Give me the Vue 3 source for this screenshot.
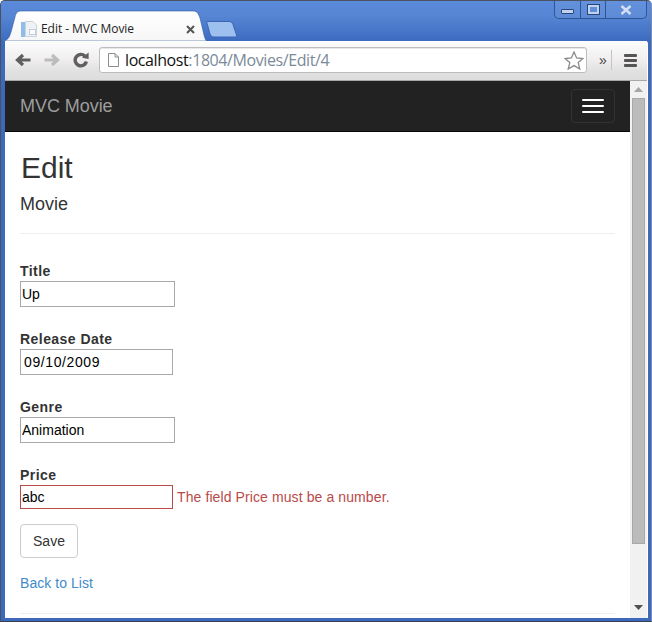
<script setup>
const fields = [
  { id: 'title', label: 'Title', value: 'Up', kind: 'wide' },
  { id: 'date', label: 'Release Date', value: '09/10/2009', kind: 'date' },
  { id: 'genre', label: 'Genre', value: 'Animation', kind: 'wide' },
  { id: 'price', label: 'Price', value: 'abc', kind: 'bad', error: 'The field Price must be a number.' }
]
</script>

<template>
  <div class="window">
    <header class="titlebar">
      <div class="tab">
        <svg class="tab-shape" width="206" height="31" viewBox="0 0 206 31">
          <path d="M0 31 C7 31 8 28 10 22 L14 7 C15 2 17 1 21 1 L192 1 C196 1 197 3 199 8 L203 25 C204 29 205 31 206 31 Z" fill="url(#tabfill)" stroke="#2f5a9f" stroke-width="0.6"/>
          <defs>
            <linearGradient id="tabfill" x1="0" y1="0" x2="0" y2="1">
              <stop offset="0" stop-color="#ffffff"/>
              <stop offset="1" stop-color="#f6f6f6"/>
            </linearGradient>
          </defs>
        </svg>
        <svg class="favicon" width="16" height="16" viewBox="0 0 16 16">
          <rect x="0" y="1" width="4" height="15" fill="#8fbce8"/>
          <path d="M4.5 .5 H12 L15.5 4 V15.5 H4.5 Z" fill="#eef1f5" stroke="#ccd2da"/>
          <rect x="8.5" y="8.5" width="6" height="5" fill="#fbfcfd" stroke="#c3ccd7"/>
        </svg>
        <span class="tab-title">Edit - MVC Movie</span>
        <span class="tab-close">
          <svg width="9" height="9" viewBox="0 0 9 9"><path d="M1 1 L8 8 M8 1 L1 8" stroke="#555" stroke-width="2" fill="none"/></svg>
        </span>
      </div>
      <svg class="newtab" width="32" height="17" viewBox="0 0 32 17">
        <path d="M.5 .5 H23 C25 .5 26 1.5 27 3.5 L30.5 14 C31 15.5 30.5 16 29 16 H8 C6 16 5 15 4 13 Z" fill="#9dc0ef" stroke="#3a66b3"/>
      </svg>
      <div class="controls">
        <span class="ctl ctl-min"><i></i></span>
        <span class="ctl ctl-max"><i></i></span>
        <span class="ctl ctl-close">
          <svg width="12" height="10" viewBox="0 0 12 10"><path d="M1.5 1 L10.5 9 M10.5 1 L1.5 9" stroke="#d5e0f2" stroke-width="2.4" fill="none"/></svg>
        </span>
      </div>
    </header>

    <div class="chrome">
      <nav class="toolbar">
        <svg class="nav" width="16" height="14" viewBox="0 0 16 14"><path d="M15.5 7 H3 M8 2 L2.5 7 L8 12" fill="none" stroke="#5f5f5f" stroke-width="3.2"/></svg>
        <svg class="nav" width="16" height="14" viewBox="0 0 16 14"><path d="M.5 7 H13 M8 2 L13.5 7 L8 12" fill="none" stroke="#bcbcbc" stroke-width="3.2"/></svg>
        <svg class="nav" width="16" height="16" viewBox="0 0 16 16"><path d="M13.4 9.5 A5.7 5.7 0 1 1 11.8 4" fill="none" stroke="#5f5f5f" stroke-width="3.4"/><path d="M9 5.8 L15.6 7 V.6 Z" fill="#5f5f5f"/></svg>
        <div class="omnibox">
          <svg width="12" height="14" viewBox="0 0 12 14"><path d="M1.5 .5 H8 L11.5 4 V13.5 H1.5 Z M8 .5 V4 H11.5" fill="#fff" stroke="#8d8d8d"/></svg>
          <span class="url"><span class="host">localhost</span>:1804/Movies/Edit/4</span>
          <svg class="star" width="20" height="19" viewBox="0 0 20 19"><path d="M10 1 L12.6 7 L19 7.5 L14.2 11.6 L15.8 18 L10 14.6 L4.2 18 L5.8 11.6 L1 7.5 L7.4 7 Z" fill="#fff" stroke="#8a8a8a" stroke-width="1.3"/></svg>
        </div>
        <span class="more">»</span>
        <span class="sep"></span>
        <span class="menu"><i></i><i></i><i></i></span>
      </nav>

      <div class="viewport">
        <main class="page">
          <div class="navbar">
            <span class="brand">MVC Movie</span>
            <button class="toggle" type="button"><i></i><i></i><i></i></button>
          </div>
          <div class="container">
            <h2>Edit</h2>
            <h4>Movie</h4>
            <hr class="rule-top">
            <div class="group" v-for="f in fields" :key="f.id">
              <label :for="f.id">{{ f.label }}</label>
              <div class="line">
                <input :id="f.id" :class="f.kind" :value="f.value">
                <span v-if="f.error" class="error">{{ f.error }}</span>
              </div>
            </div>
            <button class="save" type="button">Save</button>
            <a class="back" href="#">Back to List</a>
            <hr class="rule-bottom">
          </div>
        </main>
        <aside class="scrollbar">
          <svg width="9" height="5" viewBox="0 0 9 5"><path d="M4.5 0 L9 5 H0 Z" fill="#a5a5a5"/></svg>
          <div class="thumb"></div>
          <svg class="down" width="9" height="5" viewBox="0 0 9 5"><path d="M0 0 H9 L4.5 5 Z" fill="#505050"/></svg>
        </aside>
      </div>
    </div>
  </div>
</template>

<style>
html, body { margin: 0; padding: 0; overflow: hidden; background: #fff; }
</style>

<style scoped>
.window {
  width: 652px; height: 622px; box-sizing: border-box;
  display: flex; flex-direction: column;
  background: #3c69bd;
  border: 1px solid #4a5260; border-bottom-color: #35404f; border-right-color: #7d8ca5;
  border-radius: 5px 5px 0 0;
  overflow: hidden;
  font-family: "Liberation Sans", Arial, sans-serif;
  color: #333;
}
.titlebar {
  height: 40px; flex: none; display: flex; align-items: flex-start;
  background: linear-gradient(#5a8bda, #5584d3 40%, #3d6bc0);
  position: relative;
}
.tab { position: relative; width: 206px; height: 31px; margin-top: 9px; flex: none; }
.tab-shape { position: absolute; left: 0; top: 0; }
.favicon { position: absolute; left: 20px; top: 11px; }
.tab-title { position: absolute; left: 40px; top: 11px; font-size: 12px; line-height: 16px; color: #222; white-space: nowrap; font-family: "Open Sans", sans-serif; letter-spacing: -.05px; }
.tab-close { position: absolute; left: 185px; top: 15px; display: flex; }
.newtab { margin: 20px 0 0 -1px; flex: none; }
.controls {
  margin-left: auto; margin-right: 4px; display: flex; height: 17px;
  border: 1px solid #2f5597; border-top: 0; border-radius: 0 0 5px 5px;
  background: rgba(255,255,255,.06);
}
.ctl { display: flex; align-items: center; justify-content: center; box-sizing: border-box; }
.ctl + .ctl { border-left: 1px solid #2f5597; }
.ctl-min { width: 25px; }
.ctl-max { width: 25px; }
.ctl-close { width: 41px; }
.ctl-min i { display: block; width: 11px; height: 3px; margin-top: 4px; background: #c3d2ec; border: 1px solid #28477f; border-radius: 1px; }
.ctl-max i { display: block; width: 7px; height: 5px; margin-top: -1px; border: 2px solid #c3d2ec; outline: 1px solid #28477f; }

.chrome {
  flex: 1; min-height: 0; margin: 0 3px 3px 4px;
  display: flex; flex-direction: column;
  background: #fff; border-right: 1px solid #fff;
  border-radius: 3px 3px 0 0;
}
.toolbar {
  height: 40px; flex: none; box-sizing: border-box;
  display: flex; align-items: center; padding: 0 0 1px 10px;
  background: linear-gradient(#fdfdfd, #f1eff0 45%, #e3e2e2 75%, #dcdcdc);
  border-bottom: 1px solid #a8a8a8;
}
.nav { margin-right: 13px; flex: none; }
.nav:nth-child(3) { margin-right: 10px; }
.omnibox {
  width: 488px; height: 26px; box-sizing: border-box; flex: none;
  display: flex; align-items: center; padding: 0 2px 0 7px;
  background: #fff; border: 1px solid #bdbdbd; border-radius: 3px;
  box-shadow: inset 0 1px 0 #e8e8e8;
}
.url { margin-left: 6px; font-size: 16px; color: #7b8a99; font-family: "Open Sans", sans-serif; letter-spacing: -.41px; white-space: nowrap; }
.host { color: #111; }
.star { margin-left: auto; }
.more { margin-left: 12px; font-size: 14px; line-height: 14px; color: #444; }
.sep { width: 1px; height: 20px; background: #c4c4c4; margin-left: 4px; }
.menu { margin-left: 12px; display: flex; flex-direction: column; gap: 2px; }
.menu i { display: block; width: 13px; height: 3px; background: #555; border-radius: 1px; }

.viewport { flex: 1; min-height: 0; display: flex; }
.page { flex: 1; min-width: 0; overflow: hidden; background: #fff; }
.navbar {
  height: 51px; box-sizing: border-box; padding: 0 15px;
  display: flex; align-items: center; justify-content: space-between;
  background: #222; border-bottom: 1px solid #080808;
}
.brand { font-size: 18px; color: #9d9d9d; letter-spacing: -.05px; }
.toggle {
  width: 44px; height: 34px; padding: 0; box-sizing: border-box;
  display: flex; flex-direction: column; align-items: center; justify-content: center; gap: 4px;
  background: transparent; border: 1px solid #333; border-radius: 4px;
}
.toggle i { display: block; width: 22px; height: 2px; background: #fff; border-radius: 1px; }
.container { padding: 0 15px; }
h2 { margin: 19px 0 10px 1px; font-size: 30px; line-height: 33px; font-weight: 500; }
h4 { margin: 10px 0; font-size: 18px; line-height: 20px; font-weight: 500; }
hr { border: 0; border-top: 1px solid #eee; margin: 0; }
.rule-top { margin: 19px 0 30px; }
.group { margin-bottom: 25px; }
label { display: block; font-size: 14px; line-height: 15px; font-weight: bold; margin-bottom: 2px; letter-spacing: .45px; }
.line { display: flex; align-items: center; }
input {
  box-sizing: border-box; height: 26px; padding: 1px; margin: 0;
  border: 1px solid #a9a9a9; background: #fff; color: #000;
  font: 14px "Liberation Sans", Arial, sans-serif; outline: none;
}
input.wide { width: 155px; }
input.date { width: 153px; padding-left: 3px; letter-spacing: .6px; }
input.bad { width: 153px; height: 24px; border-color: #b94a48; }
.error { margin-left: 4px; font-size: 14px; color: #b94a48; letter-spacing: .1px; }
.group:last-of-type { margin-bottom: 15px; }
.save {
  display: block; width: 58px; height: 34px; padding: 0;
  background: #fff; border: 1px solid #ccc; border-radius: 4px; color: #333;
  font: 14px "Liberation Sans", Arial, sans-serif;
}
.back { display: block; margin-top: 17px; font-size: 14px; line-height: 16px; color: #428bca; text-decoration: none; letter-spacing: .05px; }
.rule-bottom { margin-top: 22px; }
.scrollbar {
  width: 17px; flex: none; box-sizing: border-box;
  display: flex; flex-direction: column; align-items: center;
  padding: 6px 0 8px; background: #f1f1f1;
}
.thumb { width: 13px; height: 446px; margin-top: 6px; background: #bbb; border: 1px solid #a8a8a8; box-sizing: border-box; }
.down { margin-top: auto; }
</style>
